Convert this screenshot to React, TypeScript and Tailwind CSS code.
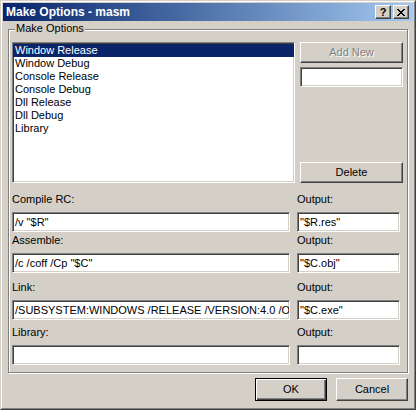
import React from 'react';

const sunken =
  'bg-white border border-t-[#808080] border-l-[#808080] border-r-white border-b-white shadow-[inset_1px_1px_0_#404040,inset_-1px_-1px_0_#d4d0c8]';
const raised =
  'bg-[#d4d0c8] border border-t-white border-l-white border-r-[#404040] border-b-[#404040] shadow-[inset_-1px_-1px_0_#808080]';

const items = ['Window Release', 'Window Debug', 'Console Release', 'Console Debug', 'Dll Release', 'Dll Debug', 'Library'];

const fields = [
  { label: 'Compile RC:', value: '/v "$R"', output: '"$R.res"', mt: 'mt-[10px]' },
  { label: 'Assemble:', value: '/c /coff /Cp "$C"', output: '"$C.obj"', mt: 'mt-[2px]' },
  { label: 'Link:', value: '/SUBSYSTEM:WINDOWS /RELEASE /VERSION:4.0 /OPT:NOREF', output: '"$C.exe"', mt: 'mt-[8px]' },
  { label: 'Library:', value: '', output: '', mt: 'mt-[6px]' },
];

const TextBox: React.FC<{ value: string; className?: string }> = ({ value, className = '' }) => (
  <div className={`${sunken} h-[20px] pl-[2px] leading-[18px] overflow-hidden whitespace-nowrap ${className}`}>{value}</div>
);

const Field: React.FC<{ label: string; value: string }> = ({ label, value }) => (
  <div className="flex flex-col">
    <div className="h-[13px] leading-[13px]">{label}</div>
    <TextBox value={value} className="mt-[6px]" />
  </div>
);

const CloseGlyph = () => (
  <svg width="8" height="7" viewBox="0 0 8 7" shapeRendering="crispEdges">
    <path
      d="M0 0h2v1h-2zM6 0h2v1h-2zM1 1h2v1h-2zM5 1h2v1h-2zM2 2h4v1h-4zM3 3h2v1h-2zM2 4h4v1h-4zM1 5h2v1h-2zM5 5h2v1h-2zM0 6h2v1h-2zM6 6h2v1h-2z"
      fill="#000"
    />
  </svg>
);

const App: React.FC = () => {
  return (
    <div className="w-[416px] h-[410px] bg-[#d4d0c8] border border-t-[#d4d0c8] border-l-[#d4d0c8] border-r-[#404040] border-b-[#404040] font-['Liberation_Sans',Arial,sans-serif] text-[11px] text-black select-none">
      <div className="h-full border border-t-white border-l-white border-r-[#808080] border-b-[#808080] p-[1px] flex flex-col">
        {/* title bar */}
        <div className="h-[18px] bg-linear-to-r from-[#0a246a] to-[#a6caf0] flex items-center pl-[3px] pr-[4px]">
          <span className="text-white font-bold text-[12px] leading-[18px]">Make Options - masm</span>
          <div className="ml-auto flex gap-[2px]">
            <div className={`${raised} w-[16px] h-[14px] flex items-center justify-center font-bold text-[11px] leading-none`}>?</div>
            <div className={`${raised} w-[16px] h-[14px] flex items-center justify-center`}>
              <CloseGlyph />
            </div>
          </div>
        </div>

        {/* group box */}
        <div className="relative mx-[5px] mt-[8px] h-[344px] border border-[#808080] shadow-[inset_1px_1px_0_#fff,1px_1px_0_#fff] pt-[12px] pl-[3px] pr-[3px]">
          <span className="absolute -top-[8px] left-[6px] px-[1px] bg-[#d4d0c8] leading-[13px]">Make Options</span>

          <div className="flex gap-[5px] h-[141px]">
            <div className={`${sunken} w-[283px] pt-[1px]`}>
              {items.map((it, i) => (
                <div
                  key={it}
                  className={`h-[13px] leading-[13px] pl-[2px] ${i === 0 ? 'bg-[#0a246a] text-white' : ''}`}
                >
                  {it}
                </div>
              ))}
            </div>
            <div className="w-[103px] flex flex-col">
              <div className={`${raised} h-[21px] flex items-center justify-center text-[#808080] [text-shadow:1px_1px_0_#fff]`}>
                Add New
              </div>
              <TextBox value="" className="mt-[4px]" />
              <div className={`${raised} mt-auto h-[21px] flex items-center justify-center`}>Delete</div>
            </div>
          </div>

          {fields.map((f) => (
            <div key={f.label} className={`grid grid-cols-[278px_103px] gap-x-[7px] ${f.mt}`}>
              <Field label={f.label} value={f.value} />
              <Field label="Output:" value={f.output} />
            </div>
          ))}
        </div>

        {/* dialog buttons */}
        <div className="flex justify-end gap-[9px] mt-[5px] pr-[5px]">
          <div className="w-[72px] h-[23px] border border-black shadow-[inset_1px_1px_0_#fff,inset_-1px_-1px_0_#404040,inset_-2px_-2px_0_#808080] flex items-center justify-center">
            OK
          </div>
          <div className={`${raised} w-[72px] h-[23px] flex items-center justify-center`}>Cancel</div>
        </div>
      </div>
    </div>
  );
};

export default App;
